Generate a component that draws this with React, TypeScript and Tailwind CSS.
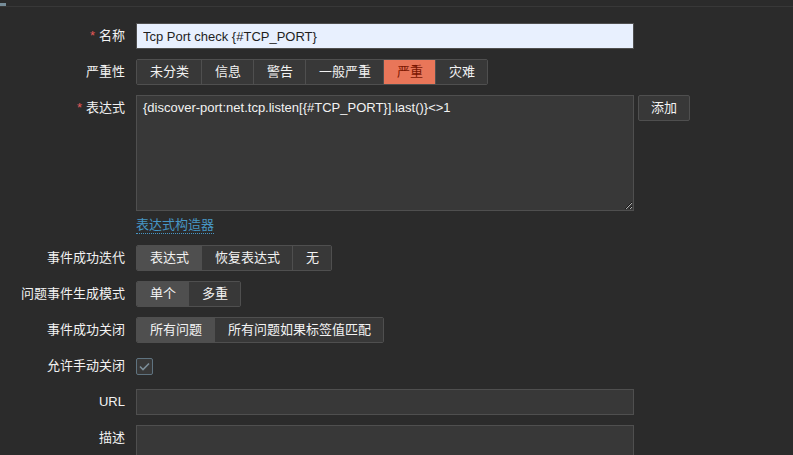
import React from 'react';

const font = "font-['Liberation_Sans','Noto_Sans_CJK_SC',Arial,sans-serif]";

type Seg = { label: string; active?: boolean; danger?: boolean };

const Segmented = ({ items }: { items: Seg[] }) => {
  return (
    <div className="inline-flex h-[26px] rounded-[2px] border border-[#4f4f4f] overflow-hidden">
      {items.map((it, i) => (
        <div
          key={it.label}
          className={
            'pl-[13px] pr-[12px] leading-[24px] text-[13px] ' +
            (i > 0 ? 'border-l border-[#4f4f4f] ' : '') +
            (it.danger
              ? 'bg-[#e97659] text-[#7a1500]'
              : it.active
              ? 'bg-[#4f4f4f] text-[#f2f2f2]'
              : 'bg-[#383838] text-[#f2f2f2]')
          }
        >
          {it.label}
        </div>
      ))}
    </div>
  );
};

const Label = ({ text, required }: { text: string; required?: boolean }) => (
  <div className="w-[125px] h-[26px] shrink-0 flex items-center justify-end text-[13px] text-[#f2f2f2]">
    {required && <span className="text-[#e45959] mr-[4px]">*</span>}
    {text}
  </div>
);

const Row = ({ children }: { children: React.ReactNode }) => (
  <div className="flex items-start gap-[11px]">{children}</div>
);

export default function App() {
  return (
    <div className={`w-[793px] h-[455px] bg-[#2b2b2b] overflow-hidden ${font}`}>
      <div className="h-[7px] border-b border-[#383838] flex items-end">
        <div className="w-[6px] h-[3px] bg-[#768d99]" />
      </div>

      <div className="pt-[16px] flex flex-col gap-[10px]">
        <Row>
          <Label text="名称" required />
          <input
            readOnly
            value="Tcp Port check {#TCP_PORT}"
            className="w-[498px] h-[26px] px-[6px] text-[13px] bg-[#e8f0fe] text-[#1f1f1f] border border-[#4f4f4f] outline-none"
          />
        </Row>

        <Row>
          <Label text="严重性" />
          <Segmented
            items={[
              { label: '未分类' },
              { label: '信息' },
              { label: '警告' },
              { label: '一般严重' },
              { label: '严重', danger: true },
              { label: '灾难' },
            ]}
          />
        </Row>

        <Row>
          <Label text="表达式" required />
          <div className="flex flex-col items-start">
            <div className="flex items-start gap-[4px]">
              <textarea
                readOnly
                value="{discover-port:net.tcp.listen[{#TCP_PORT}].last()}<>1"
                className="w-[498px] h-[116px] px-[6px] py-[3px] text-[13px] leading-[17px] bg-[#383838] text-[#f2f2f2] border border-[#4f4f4f] outline-none resize [color-scheme:dark]"
              />
              <button className="h-[26px] px-[12px] text-[13px] text-[#f2f2f2] bg-[#383838] border border-[#4f4f4f] rounded-[2px]">
                添加
              </button>
            </div>
            <span className="mt-[6px] mb-[1px] text-[13px] leading-[16px] text-[#4796c4] border-b border-dotted border-[#4796c4]">
              表达式构造器
            </span>
          </div>
        </Row>

        <Row>
          <Label text="事件成功迭代" />
          <Segmented
            items={[{ label: '表达式', active: true }, { label: '恢复表达式' }, { label: '无' }]}
          />
        </Row>

        <Row>
          <Label text="问题事件生成模式" />
          <Segmented items={[{ label: '单个', active: true }, { label: '多重' }]} />
        </Row>

        <Row>
          <Label text="事件成功关闭" />
          <Segmented
            items={[{ label: '所有问题', active: true }, { label: '所有问题如果标签值匹配' }]}
          />
        </Row>

        <Row>
          <Label text="允许手动关闭" />
          <div className="h-[26px] flex items-center">
            <div className="w-[17px] h-[17px] rounded-[2px] border border-[#5f7380] bg-[#383838] flex items-center justify-center">
              <svg width="11" height="9" viewBox="0 0 11 9" fill="none">
                <polyline points="1,4.5 4,7.5 10,1.5" stroke="#7c8e99" strokeWidth="1.6" />
              </svg>
            </div>
          </div>
        </Row>

        <Row>
          <Label text="URL" />
          <input
            readOnly
            value=""
            className="w-[498px] h-[26px] px-[6px] text-[13px] bg-[#383838] text-[#f2f2f2] border border-[#4f4f4f] outline-none"
          />
        </Row>

        <Row>
          <Label text="描述" />
          <div className="w-[498px] h-[60px] bg-[#383838] border border-[#4f4f4f]" />
        </Row>
      </div>
    </div>
  );
}
